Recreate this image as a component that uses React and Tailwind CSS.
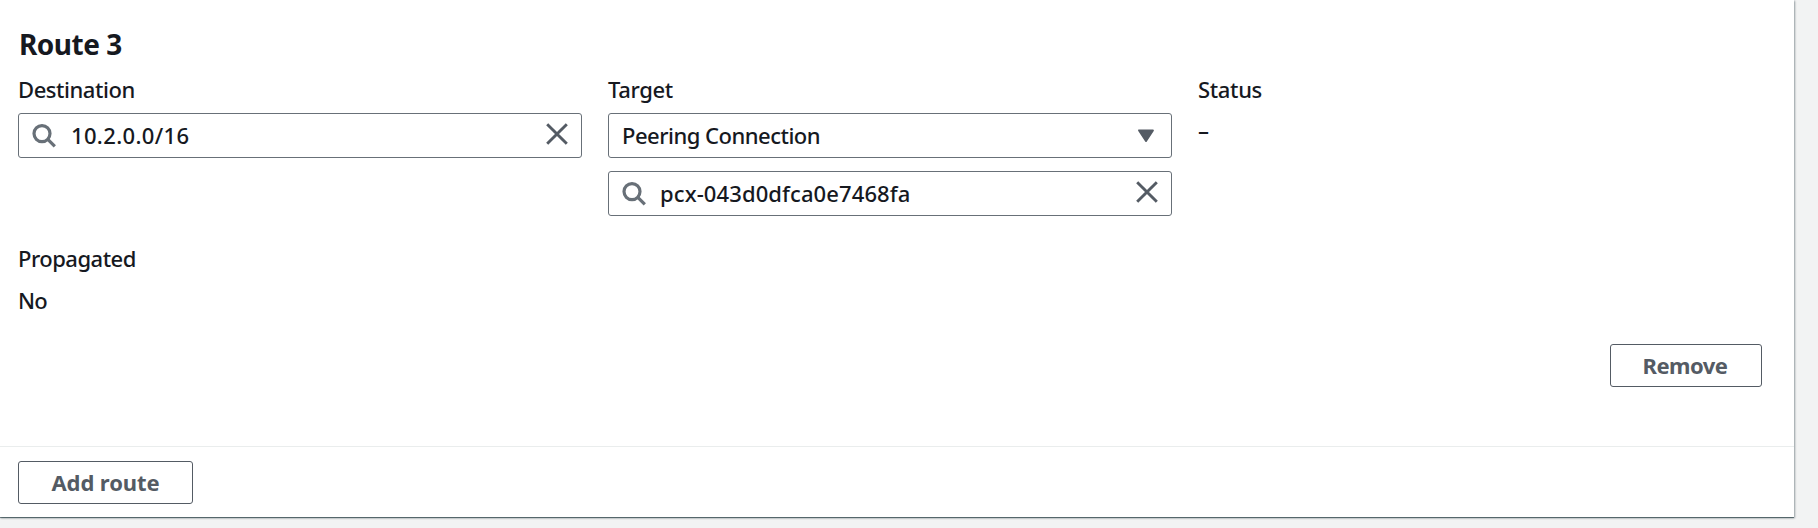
function SearchIcon() {
  return (
    <svg className="h-6 w-6 shrink-0" viewBox="0 0 24 24" fill="none" stroke="#687078" strokeWidth="3.2">
      <circle cx="10" cy="9.6" r="8" />
      <path d="M15.6 15.2 L22.8 22.4" />
    </svg>
  );
}

function CloseIcon() {
  return (
    <svg className="h-[22px] w-[22px] shrink-0" viewBox="0 0 22 22" fill="none" stroke="#545b64" strokeWidth="2.9">
      <path d="M1.2 1.2 L20.8 20.8 M20.8 1.2 L1.2 20.8" />
    </svg>
  );
}

function CaretIcon() {
  return (
    <svg className="h-[14px] w-4 shrink-0" viewBox="0 0 16 14" fill="#545b64" stroke="#545b64" strokeWidth="2" strokeLinejoin="round">
      <path d="M1.1 1.4 H14.9 L8 12 Z" />
    </svg>
  );
}

function SearchField({ value, tracking }) {
  return (
    <div className="flex h-[45px] items-center rounded-[3px] border border-[#687078] bg-white pr-[13px] pl-[13px]">
      <SearchIcon />
      <span className={`flex-1 pb-[2px] leading-7 ${tracking}`}>{value}</span>
      <div className="-mt-[3px] flex">
        <CloseIcon />
      </div>
    </div>
  );
}

function Button({ children, className }) {
  return (
    <button
      className={`flex items-center justify-center rounded-[3px] border border-[#545b64] bg-white font-bold text-[#545b64] ${className}`}
    >
      {children}
    </button>
  );
}

export default function App() {
  return (
    <div className="h-[528px] overflow-hidden bg-[#f2f3f3] font-['Noto_Sans',sans-serif] text-[22px] leading-7 font-medium text-[#16191f]">
      <main className="flex h-[517px] w-[1794px] flex-col bg-white shadow-[0_1px_2px_0_rgba(0,28,36,0.3),1px_1px_2px_0_rgba(0,28,36,0.3),0_1px_0_0_#879596]">
        <section className="flex h-[446px] flex-col pr-8 pl-[18px]">
          <h2 className="mt-[26px] h-[49px] pl-px text-[28px] leading-9 font-bold tracking-[-0.5px]">Route 3</h2>
          <div className="grid h-[169px] grid-cols-[564px_564px_564px] gap-x-[26px]">
            <div>
              <p className="mb-[10px] tracking-[-0.45px]">Destination</p>
              <SearchField value="10.2.0.0/16" tracking="ml-[15px] tracking-[0.35px]" />
            </div>
            <div>
              <p className="mb-[10px] tracking-[-0.35px]">Target</p>
              <div className="flex h-[45px] items-center justify-between rounded-[3px] border border-[#687078] bg-white pr-[17px] pl-[13px]">
                <span className="pb-[2px] tracking-[-0.5px]">Peering Connection</span>
                <CaretIcon />
              </div>
              <div className="mt-[13px]">
                <SearchField value="pcx-043d0dfca0e7468fa" tracking="ml-[14px] tracking-[0.1px]" />
              </div>
            </div>
            <div>
              <p className="tracking-[-0.35px]">Status</p>
              <p className="mt-[13px]">–</p>
            </div>
          </div>
          <div>
            <p className="tracking-[-0.5px]">Propagated</p>
            <p className="mt-[14px] tracking-[-0.8px]">No</p>
          </div>
          <div className="mt-[30px] flex justify-end">
            <Button className="h-[43px] w-[152px] pr-0.5 pb-[2px] tracking-[-0.5px]">Remove</Button>
          </div>
        </section>
        <footer className="flex flex-1 border-t border-[#eaeded] pt-[14px] pl-[18px]">
          <Button className="h-[43px] w-[175px] pb-[2px] tracking-[-0.1px]">Add route</Button>
        </footer>
      </main>
    </div>
  );
}
